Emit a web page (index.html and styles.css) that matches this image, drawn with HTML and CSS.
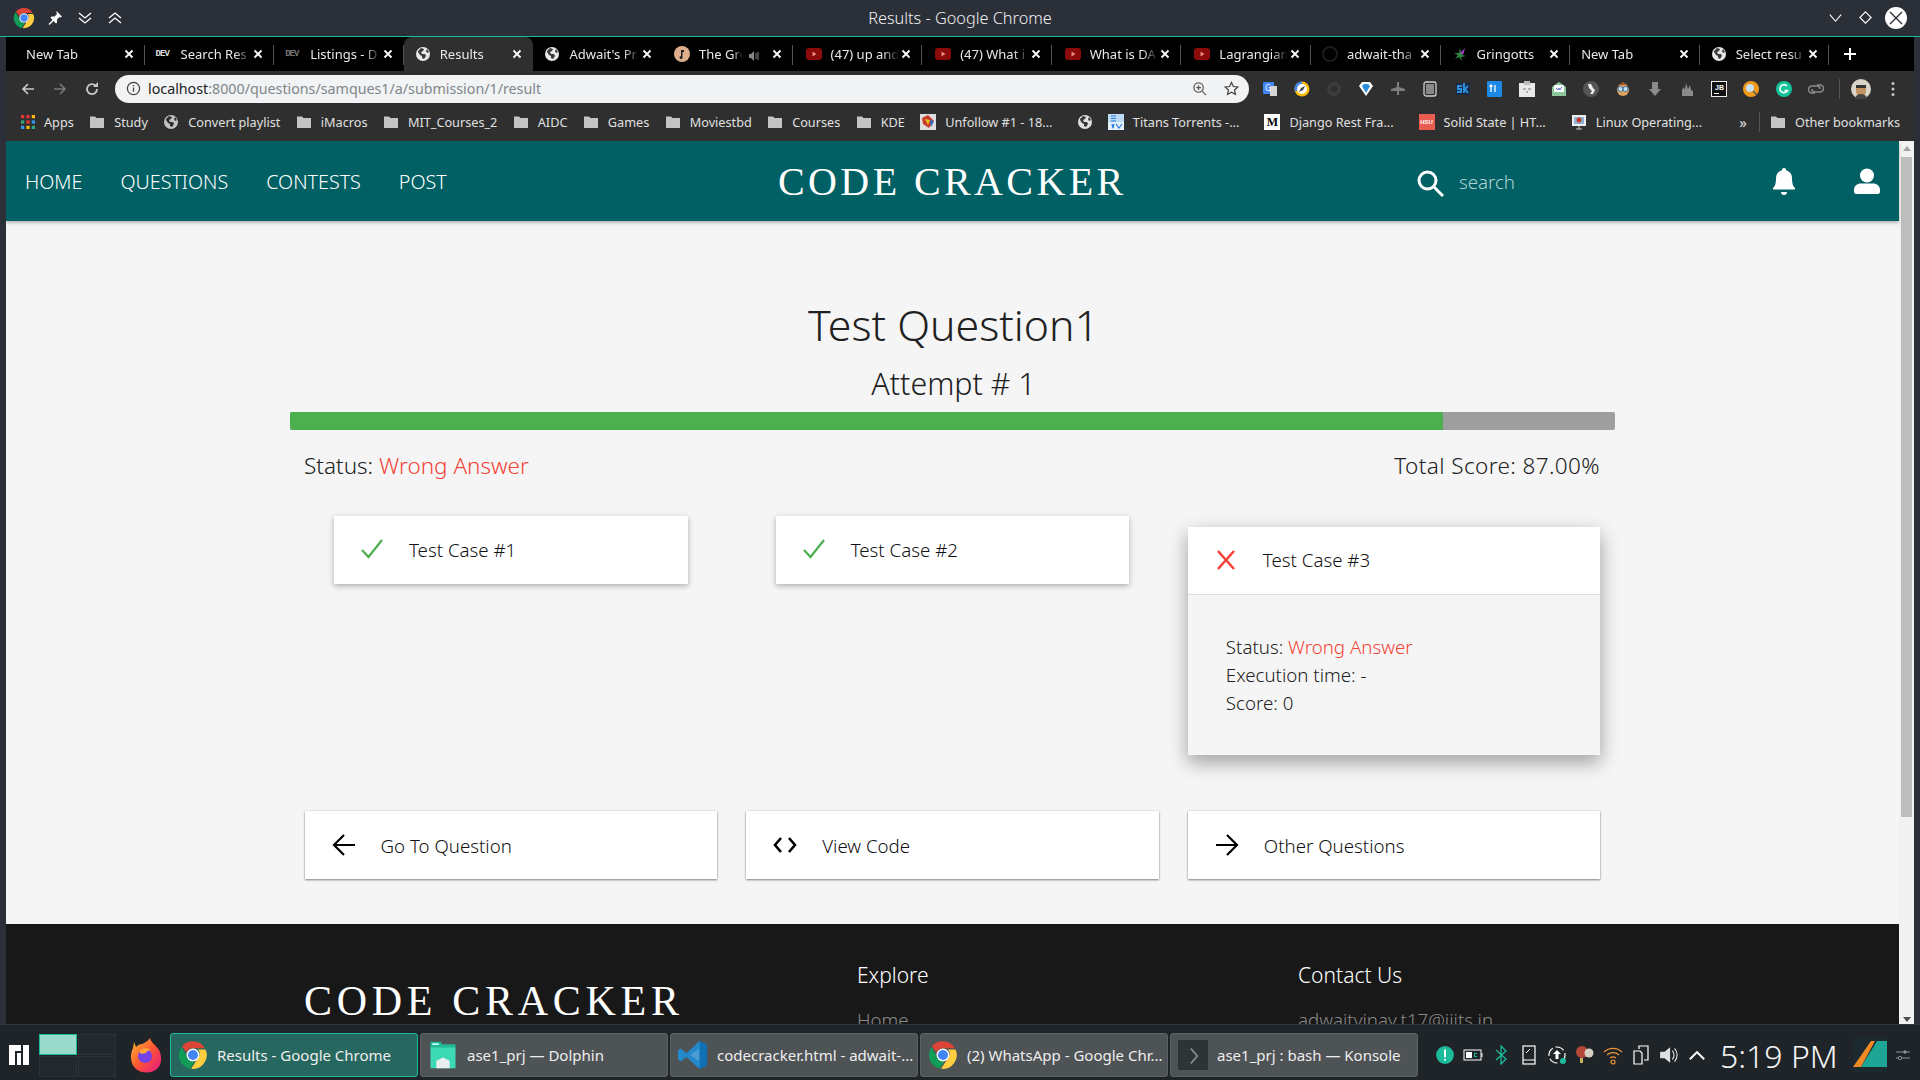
FILE: index.html
```html
<!DOCTYPE html>
<html lang="en">
<head>
    <meta charset="UTF-8">
    <title>Results - Google Chrome</title>
    <link rel="stylesheet" href="styles.css">
</head>
<body>
<svg class="sprites" width="0" height="0">
    <symbol id="chrome" viewBox="0 0 24 24">
        <path fill="#db4437" d="M12 1a11 11 0 0 1 9.5 5.5H12a5.5 5.5 0 0 0-5.2 3.7L3.2 4.9A11 11 0 0 1 12 1z"/>
        <path fill="#0f9d58" d="M2.9 5.5l4.7 8.9A5.5 5.5 0 0 0 13 17.400l-3.500 5.400A11 11 0 0 1 2.900 5.500z"/>
        <path fill="#ffcd40" d="M22 7.500A11 11 0 0 1 10.500 23l4.700-7.500A5.500 5.500 0 0 0 16 7.500z"/>
        <circle cx="12" cy="12" r="5.200" fill="#fff"/>
        <circle cx="12" cy="12" r="4" fill="#4285f4"/>
    </symbol>
    <symbol id="globe" viewBox="0 0 16 16">
        <circle cx="8" cy="8" r="7" fill="currentColor"/>
        <path fill="#000" opacity=".75" d="M3 5l3-3 3 1-1 2-2 1 1 2 3 0 1 2-2 3-2-1 0-2-2-1-2-3zM12 3l2 3-2 1-1-2z"/>
    </symbol>
    <symbol id="folder" viewBox="0 0 16 16">
        <path fill="currentColor" d="M1 2.500h5l1.500 1.500H15v10H1z"/>
    </symbol>
    <symbol id="yt" viewBox="0 0 16 12">
        <rect width="16" height="12" rx="3" fill="#8c0a0a"/>
        <path d="M6.500 3.500l4 2.500-4 2.500z" fill="#e98a8a"/>
    </symbol>
    <symbol id="x" viewBox="0 0 10 10">
        <path d="M1.500 1.500l7 7M8.500 1.500l-7 7" stroke="currentColor" stroke-width="1.800" fill="none"/>
    </symbol>
</svg>

<div class="window">
    <header class="titlebar">
        <div class="title-left">
            <svg class="chrome-logo"><use href="#chrome"/></svg>
            <svg class="wm-icon" viewBox="0 0 16 16"><path fill="#fff" d="M9.500 1l5.500 5.500-1.500 1-1-.5-2.500 2.500 0 3-1 1-2.500-2.500-4 4-1-1 4-4L3.500 7.500l1-1 3 0L10 4l-.5-1z"/></svg>
            <svg class="wm-icon" viewBox="0 0 16 16"><path fill="none" stroke="#fff" stroke-width="1.300" d="M2 3l6 5 6-5M2 8l6 5 6-5"/></svg>
            <svg class="wm-icon" viewBox="0 0 16 16"><path fill="none" stroke="#fff" stroke-width="1.300" d="M2 8l6-5 6 5M2 13l6-5 6 5"/></svg>
        </div>
        <div class="title-text">Results - Google Chrome</div>
        <div class="title-right">
            <svg class="wm-btn" viewBox="0 0 16 16"><path fill="none" stroke="#fff" stroke-width="1.200" d="M2 5l6 7 6-7"/></svg>
            <svg class="wm-btn" viewBox="0 0 16 16"><path fill="none" stroke="#fff" stroke-width="1.200" d="M8 2l6 6-6 6-6-6z"/></svg>
            <svg class="wm-close" viewBox="0 0 22 22"><circle cx="11" cy="11" r="11" fill="#fff"/><path d="M5 5l12 12M17 5L5 17" stroke="#2b2f38" stroke-width="1.400"/></svg>
        </div>
    </header>

    <nav class="tabstrip">
        <div class="tab"><span class="tab-name no-icon">New Tab</span><svg class="tab-x"><use href="#x"/></svg></div>
        <div class="tab"><span class="dev">DEV</span><span class="tab-name">Search Res</span><svg class="tab-x"><use href="#x"/></svg></div>
        <div class="tab"><span class="dev dim">DEV</span><span class="tab-name">Listings - D</span><svg class="tab-x"><use href="#x"/></svg></div>
        <div class="tab active"><svg class="tab-ico"><use href="#globe"/></svg><span class="tab-name">Results</span><svg class="tab-x"><use href="#x"/></svg></div>
        <div class="tab no-sep"><svg class="tab-ico"><use href="#globe"/></svg><span class="tab-name">Adwait's Pr</span><svg class="tab-x"><use href="#x"/></svg></div>
        <div class="tab"><svg class="tab-ico" viewBox="0 0 16 16"><circle cx="8" cy="8" r="8" fill="#dcae8c"/><path d="M7 11V4h3v2H8.500v5a1.500 1.500 0 1 1-1.500-1z" fill="#222"/></svg><span class="tab-name short">The Gre</span><span class="speaker"><svg viewBox="0 0 12 12"><path fill="#888" d="M1 4h2l3-3v10L3 8H1z"/><path fill="none" stroke="#888" d="M8 3v6M10 2v8"/></svg></span><svg class="tab-x"><use href="#x"/></svg></div>
        <div class="tab"><svg class="tab-yt"><use href="#yt"/></svg><span class="tab-name">(47) up and</span><svg class="tab-x"><use href="#x"/></svg></div>
        <div class="tab"><svg class="tab-yt"><use href="#yt"/></svg><span class="tab-name">(47) What i</span><svg class="tab-x"><use href="#x"/></svg></div>
        <div class="tab"><svg class="tab-yt"><use href="#yt"/></svg><span class="tab-name">What is DA</span><svg class="tab-x"><use href="#x"/></svg></div>
        <div class="tab"><svg class="tab-yt"><use href="#yt"/></svg><span class="tab-name">Lagrangian</span><svg class="tab-x"><use href="#x"/></svg></div>
        <div class="tab"><svg class="tab-ico github" viewBox="0 0 16 16"><circle cx="8" cy="8" r="7" fill="none" stroke="#1c1c1c" stroke-width="2"/></svg><span class="tab-name">adwait-tha</span><svg class="tab-x"><use href="#x"/></svg></div>
        <div class="tab"><svg class="tab-ico" viewBox="0 0 16 16"><path d="M8 2l1 5 4-4-3 6 4 1-5 1 1 4-3-4-4 2 3-4-4-2 5 0z" fill="#2e8b3c"/><path d="M8 7l5-5-2 7z" fill="#a03cc0"/></svg><span class="tab-name">Gringotts</span><svg class="tab-x"><use href="#x"/></svg></div>
        <div class="tab"><span class="tab-name no-icon">New Tab</span><svg class="tab-x"><use href="#x"/></svg></div>
        <div class="tab"><svg class="tab-ico"><use href="#globe"/></svg><span class="tab-name">Select resu</span><svg class="tab-x"><use href="#x"/></svg></div>
        <svg class="tab-plus" viewBox="0 0 14 14"><path d="M7 1v12M1 7h12" stroke="#fff" stroke-width="2"/></svg>
    </nav>

    <div class="toolbar">
        <svg class="tool-btn" viewBox="0 0 16 16"><path fill="none" stroke="#c8c8c8" stroke-width="1.700" d="M14 8H3M8 3L3 8l5 5"/></svg>
        <svg class="tool-btn" viewBox="0 0 16 16"><path fill="none" stroke="#777" stroke-width="1.700" d="M2 8h11M8 3l5 5-5 5"/></svg>
        <svg class="tool-btn" viewBox="0 0 16 16"><path fill="none" stroke="#c8c8c8" stroke-width="1.800" d="M13 8a5 5 0 1 1-1.500-3.500"/><path fill="#c8c8c8" d="M9 6h5V1z"/></svg>
        <div class="omnibox">
            <svg class="info" viewBox="0 0 16 16"><circle cx="8" cy="8" r="6.500" fill="none" stroke="#444" stroke-width="1.300"/><path d="M8 7v4.500M8 4.300v1.400" stroke="#444" stroke-width="1.400"/></svg>
            <span class="url"><b>localhost</b>:8000/questions/samques1/a/submission/1/result</span>
            <svg class="omni-ico" viewBox="0 0 16 16"><circle cx="7" cy="7" r="5" fill="none" stroke="#555" stroke-width="1.300"/><path d="M11 11l4 4M7 4.500v5M4.500 7h5" stroke="#555" stroke-width="1.300"/></svg>
            <svg class="omni-ico" viewBox="0 0 16 16"><path fill="none" stroke="#444" stroke-width="1.300" d="M8 1.500l2 4.400 4.700.5-3.500 3.200 1 4.700L8 11.900l-4.200 2.400 1-4.700L1.300 6.400 6 5.900z"/></svg>
        </div>
        <div class="extensions">
            <span class="ext"><svg viewBox="0 0 16 16"><rect width="11" height="12" x="1" y="1" rx="1" fill="#4285f4"/><rect x="8" y="5" width="7" height="10" fill="#d5d5d5"/><text x="3" y="10" font-size="8" fill="#fff">G</text></svg></span>
            <span class="ext"><svg viewBox="0 0 16 16"><circle cx="8" cy="8" r="7.500" fill="#fbbc05"/><path d="M8 .500a7.500 7.500 0 0 0-7 10l7-2.500z" fill="#4285f4"/><circle cx="8" cy="8" r="5" fill="#fff"/><path d="M11 5L9 9 5 11l2-4z" fill="#444"/></svg></span>
            <span class="ext"><svg viewBox="0 0 16 16"><circle cx="8" cy="8" r="7" fill="#3c3c3c"/><circle cx="8" cy="8" r="3.500" fill="#2f2f2f"/></svg></span>
            <span class="ext"><svg viewBox="0 0 16 16"><path fill="#fff" d="M1 5l3-4h8l3 4-7 10z"/><path fill="#2a8fdc" d="M4 5l2-2h4l2 2-4 7z"/></svg></span>
            <span class="ext"><svg viewBox="0 0 16 16"><path fill="#7d7d7d" d="M7 1h2v5l6 2v2H9v4H7v-4H1V8l6-2z"/></svg></span>
            <span class="ext"><svg viewBox="0 0 16 16"><rect x="2" y="1" width="12" height="14" rx="2" fill="none" stroke="#cfcfcf" stroke-width="1.300"/><rect x="4" y="3" width="8" height="10" fill="#888"/></svg></span>
            <span class="ext"><svg viewBox="0 0 16 16"><rect x="1" y="2" width="14" height="12" fill="#1a2a44"/><path fill="none" stroke="#2a8fdc" stroke-width="2" d="M7 5H3v3h3v3H2M9 2v10M13 5l-3 3 3 4"/></svg></span>
            <span class="ext"><svg viewBox="0 0 16 16"><rect width="15" height="16" rx="1" fill="#1e88e5"/><path d="M4 11V4M2.500 5.500L4 4l1.500 1.500M8 4v7" stroke="#fff" stroke-width="1.300" fill="none"/></svg></span>
            <span class="ext"><svg viewBox="0 0 16 16"><rect y="2" width="16" height="14" fill="#e8e8e8"/><rect x="5" width="6" height="4" fill="#bbb"/><path d="M4 8h3M9 8h3M7 11h2" stroke="#777"/></svg></span>
            <span class="ext"><svg viewBox="0 0 16 16"><path fill="#8bc79a" d="M1 6l7-5 7 5v9H1z"/><rect x="3" y="4" width="10" height="7" rx="1" fill="#fff"/><path d="M5 7l2 2 1-2 1 2 2-3" stroke="#5b6cc0" fill="none"/></svg></span>
            <span class="ext"><svg viewBox="0 0 16 16"><circle cx="8" cy="8" r="8" fill="#555"/><path d="M5 3h3l2 4 2 2-2 4H7l2-3-3-3z" fill="#eee"/></svg></span>
            <span class="ext"><svg viewBox="0 0 16 16"><circle cx="8" cy="9" r="6" fill="#e0a060"/><circle cx="5.500" cy="8" r="2.500" fill="#bfe3f5" stroke="#3a6ea5"/><circle cx="10.500" cy="8" r="2.500" fill="#bfe3f5" stroke="#3a6ea5"/><path d="M3 4l5-3 5 3" fill="#9c5a2c"/></svg></span>
            <span class="ext"><svg viewBox="0 0 16 16"><path fill="#8a8a8a" d="M5 1h6v7h3l-6 7-6-7h3z"/></svg></span>
            <span class="ext"><svg viewBox="0 0 16 16"><path fill="#8a8a8a" d="M3 15V9l2-3 1 3 1-7 2 6 2-4 1 5 2 1v5z"/></svg></span>
            <span class="ext"><svg viewBox="0 0 16 16"><rect x=".500" y=".500" width="15" height="15" fill="#111" stroke="#eee"/><text x="4" y="9" font-size="7" font-family="Liberation Sans" font-weight="700" fill="#fff">JB</text><path d="M3 12.500h5" stroke="#fff"/></svg></span>
            <span class="ext"><svg viewBox="0 0 16 16"><circle cx="8" cy="8" r="8" fill="#f09a1c"/><circle cx="7" cy="7" r="4" fill="#c7dfee"/><path d="M10 10l4 4" stroke="#555" stroke-width="1.500"/></svg></span>
            <span class="ext"><svg viewBox="0 0 16 16"><circle cx="8" cy="8" r="8" fill="#15c39a"/><path d="M11 5a4 4 0 1 0 .500 4.500H8.500" stroke="#fff" stroke-width="1.600" fill="none"/></svg></span>
            <span class="ext"><svg viewBox="0 0 16 16"><path d="M7 12H4a3 3 0 0 1 0-7h5a3 3 0 0 1 3 3M9 4h3a3 3 0 0 1 0 7H7a3 3 0 0 1-3-3" fill="none" stroke="#8a8a8a" stroke-width="1.600"/></svg></span>
            <span class="ext-sep"></span>
            <span class="avatar"><svg viewBox="0 0 20 20"><circle cx="10" cy="10" r="10" fill="#d8d4c8"/><path d="M5 8h10v4a5 6 0 0 1-10 0z" fill="#c2925f"/><rect x="5" y="6" width="10" height="3" fill="#333"/><path d="M4 20a6 5 0 0 1 12 0z" fill="#444"/></svg></span>
            <svg class="kebab" viewBox="0 0 4 16"><circle cx="2" cy="2.500" r="1.500" fill="#c8c8c8"/><circle cx="2" cy="8" r="1.500" fill="#c8c8c8"/><circle cx="2" cy="13.500" r="1.500" fill="#c8c8c8"/></svg>
        </div>
    </div>

    <div class="bookmarks">
        <span class="mark"><svg class="apps" viewBox="0 0 13 13"><g><rect width="3" height="3" fill="#e33"/><rect x="5" width="3" height="3" fill="#e33"/><rect x="10" width="3" height="3" fill="#fb0"/><rect y="5" width="3" height="3" fill="#3a7"/><rect x="5" y="5" width="3" height="3" fill="#e33"/><rect x="10" y="5" width="3" height="3" fill="#39e"/><rect y="10" width="3" height="3" fill="#39e"/><rect x="5" y="10" width="3" height="3" fill="#fb0"/><rect x="10" y="10" width="3" height="3" fill="#3a7"/></g></svg>Apps</span>
        <span class="mark"><svg class="bm-ico"><use href="#folder"/></svg>Study</span>
        <span class="mark"><svg class="bm-ico"><use href="#globe"/></svg>Convert playlist</span>
        <span class="mark"><svg class="bm-ico"><use href="#folder"/></svg>iMacros</span>
        <span class="mark"><svg class="bm-ico"><use href="#folder"/></svg>MIT_Courses_2</span>
        <span class="mark"><svg class="bm-ico"><use href="#folder"/></svg>AIDC</span>
        <span class="mark"><svg class="bm-ico"><use href="#folder"/></svg>Games</span>
        <span class="mark"><svg class="bm-ico"><use href="#folder"/></svg>Moviestbd</span>
        <span class="mark"><svg class="bm-ico"><use href="#folder"/></svg>Courses</span>
        <span class="mark"><svg class="bm-ico"><use href="#folder"/></svg>KDE</span>
        <span class="mark"><svg class="bm-ico" viewBox="0 0 16 16"><rect width="16" height="16" fill="#ddd"/><path d="M2 4l6-3 6 6-5 7-6-4z" fill="#c8392b"/><path d="M5 5l5 1-2 5z" fill="#e8c21c"/><path d="M10 6l4 1-3 6z" fill="#2b6cc8"/></svg>Unfollow #1 - 18...</span>
        <span class="mark mark-gap"><svg class="bm-ico"><use href="#globe"/></svg></span>
        <span class="mark wide"><svg class="bm-ico" viewBox="0 0 16 16"><rect width="16" height="16" fill="#fff"/><rect y="0" width="16" height="8" fill="#bcd9f5"/><rect y="8" width="16" height="8" fill="#e4f0fb"/><path d="M3 2h5M3 4.500h5M3 7h5M4 10l1 4 1-4M8 10l3 4 3-4" stroke="#2a7be0" stroke-width="1.200" fill="none"/></svg>Titans Torrents -...</span>
        <span class="mark wide"><span class="medium">M</span>Django Rest Fra...</span>
        <span class="mark wide"><span class="hsu">HSU</span>Solid State | HT...</span>
        <span class="mark"><svg class="bm-ico" viewBox="0 0 16 16"><rect x="1" y="1" width="14" height="11" fill="#eee"/><rect x="3" y="3" width="10" height="7" fill="#8fb0d8"/><circle cx="8" cy="6" r="2.500" fill="#c8392b"/><path d="M8 12v3M5 15h6" stroke="#ccc"/></svg>Linux Operating...</span>
        <span class="more">»</span>
        <span class="ext-sep bm-sep"></span>
        <span class="mark other"><svg class="bm-ico"><use href="#folder"/></svg>Other bookmarks</span>
    </div>

    <div class="viewport">
        <main class="page">
            <div class="site-nav">
                <ul class="nav-links">
                    <li>HOME</li>
                    <li>QUESTIONS</li>
                    <li>CONTESTS</li>
                    <li>POST</li>
                </ul>
                <div class="brand">CODE CRACKER</div>
                <div class="nav-search">
                    <svg class="search-ico" viewBox="0 0 28 28"><circle cx="11.500" cy="11.500" r="8.500" fill="none" stroke="#fff" stroke-width="3"/><path d="M18 18l9 9" stroke="#fff" stroke-width="3"/></svg>
                    <span>search</span>
                </div>
                <svg class="bell" viewBox="0 0 24 28"><path fill="#fff" d="M12 1a2 2 0 0 1 2 2.300c4 1 6 4.200 6 8.200 0 5 1 7.500 3 9.500v1.500H1V21c2-2 3-4.500 3-9.500 0-4 2-7.200 6-8.200A2 2 0 0 1 12 1zM9 25h6a3 3 0 0 1-6 0z"/></svg>
                <svg class="user" viewBox="0 0 26 26"><circle cx="13" cy="7.500" r="7" fill="#fff"/><path fill="#fff" d="M0 22c0-4 3-6.500 7-6.500h12c4 0 7 2.500 7 6.500v1.500a2.500 2.500 0 0 1-2.500 2.500h-21A2.500 2.500 0 0 1 0 23.500z"/></svg>
            </div>

            <section class="result">
                <h1>Test Question1</h1>
                <h2>Attempt # 1</h2>
                <div class="progress"><div class="progress-fill" style="width: 87%"></div></div>
                <div class="summary">
                    <span>Status: <span class="wrong">Wrong Answer</span></span>
                    <span class="total">Total Score: 87.00%</span>
                </div>
                <div class="cases">
                    <div class="case-col">
                        <div class="case">
                            <div class="case-head">
                                <svg class="case-ico" viewBox="0 0 24 24"><path fill="none" stroke="#4caf50" stroke-width="2.200" d="M2 13l6.500 7L22 3"/></svg>
                                Test Case #1
                            </div>
                        </div>
                    </div>
                    <div class="case-col">
                        <div class="case">
                            <div class="case-head">
                                <svg class="case-ico" viewBox="0 0 24 24"><path fill="none" stroke="#4caf50" stroke-width="2.200" d="M2 13l6.500 7L22 3"/></svg>
                                Test Case #2
                            </div>
                        </div>
                    </div>
                    <div class="case-col">
                        <div class="case open">
                            <div class="case-head">
                                <svg class="case-ico" viewBox="0 0 24 24"><path fill="none" stroke="#f44336" stroke-width="2.600" d="M4 3l16 18M20 3L4 21"/></svg>
                                Test Case #3
                            </div>
                            <div class="case-body">
                                <div>Status: <span class="wrong">Wrong Answer</span></div>
                                <div>Execution time: -</div>
                                <div>Score: 0</div>
                            </div>
                        </div>
                    </div>
                </div>
                <div class="actions">
                    <a class="action">
                        <svg class="action-ico" viewBox="0 0 24 24"><path fill="none" stroke="#000" stroke-width="2.200" d="M23 12H3M12 2L2 12l10 10"/></svg>
                        Go To Question
                    </a>
                    <a class="action">
                        <svg class="action-ico" viewBox="0 0 24 24"><path fill="none" stroke="#000" stroke-width="2.600" d="M8 5l-6 7 6 7M16 5l6 7-6 7"/></svg>
                        View Code
                    </a>
                    <a class="action">
                        <svg class="action-ico" viewBox="0 0 24 24"><path fill="none" stroke="#000" stroke-width="2.200" d="M1 12h20M12 2l10 10-10 10"/></svg>
                        Other Questions
                    </a>
                </div>
            </section>

            <footer class="site-footer">
                <div class="footer-brand">CODE CRACKER</div>
                <div class="footer-col">
                    <h3>Explore</h3>
                    <p>Home</p>
                </div>
                <div class="footer-col">
                    <h3>Contact Us</h3>
                    <p>adwaitvinay.t17@iiits.in</p>
                </div>
            </footer>
        </main>
        <div class="scrollbar">
            <span class="scroll-up"></span>
            <div class="scroll-thumb"></div>
            <span class="scroll-down"></span>
        </div>
    </div>
</div>

<div class="taskbar">
    <svg class="manjaro" viewBox="0 0 20 20"><path fill="#fff" d="M0 0h12v6H6v14H0zM8 8h4v12H8zM14 0h6v20h-6z"/></svg>
    <div class="pager">
        <span class="desk current"></span><span class="desk"></span>
        <span class="desk"></span><span class="desk"></span>
    </div>
    <svg class="firefox" viewBox="0 0 32 36"><defs><linearGradient id="ff" x1="0" y1="0" x2="1" y2="1"><stop offset="0" stop-color="#ffbd2e"/><stop offset=".5" stop-color="#ff5634"/><stop offset="1" stop-color="#e31587"/></linearGradient></defs><path fill="url(#ff)" d="M20 1c1 5 6 7 9 12 3 6 3 13-1 18-6 6-17 6-23 0-5-5-5-14-2-20l1-6 2 5c2-2 4-3 6-3 3-1 6-3 8-6z"/><circle cx="15" cy="19" r="7" fill="#7542e5"/><path d="M9 14c3-3 8-4 12-1-3 0-4 1-5 3l-5 1z" fill="#ffa436"/></svg>
    <div class="task current"><svg class="task-ico"><use href="#chrome"/></svg><span>Results - Google Chrome</span></div>
    <div class="task"><svg class="task-ico" viewBox="0 0 32 36"><path fill="#1fb996" d="M1 2h12l2 3h16v6H1z"/><path fill="#3dd9b4" d="M1 9h30v25H1z"/><rect x="3" y="4" width="8" height="2" fill="#cff"/><path fill="#e8eeee" d="M8 34V25l8-4 8 4v9z"/></svg><span>ase1_prj — Dolphin</span></div>
    <div class="task"><svg class="task-ico" viewBox="0 0 32 32"><path fill="#2489ca" d="M23 1l8 4v22l-8 4-14-13-6 5-3-2v-10l3-2 6 5z"/><path fill="#fff" opacity=".18" d="M23 9L13 16l10 7z"/><path fill="#1070b3" d="M23 1l8 4v22l-8 4z"/></svg><span>codecracker.html - adwait-...</span></div>
    <div class="task"><svg class="task-ico"><use href="#chrome"/></svg><span>(2) WhatsApp - Google Chr...</span></div>
    <div class="task"><svg class="task-ico konsole" viewBox="0 0 28 28"><rect width="28" height="28" fill="#2c3436"/><path d="M12 8l6 7-6 7" fill="none" stroke="#8a9396" stroke-width="1.500"/></svg><span>ase1_prj : bash — Konsole</span></div>
    <div class="tray">
        <svg viewBox="0 0 18 18"><circle cx="9" cy="9" r="8" fill="#1abc9c"/><path d="M9 4v7M9 12.500v1.500" stroke="#fff" stroke-width="1.800"/></svg>
        <svg viewBox="0 0 20 18"><rect x="1" y="4" width="17" height="10" fill="none" stroke="#fff"/><rect x="3" y="6" width="6" height="6" fill="#fff"/><path d="M11 7h3v1h-2v2h2v1h-3z" fill="#1abc9c"/><rect x="18.500" y="7" width="1" height="4" fill="#fff"/></svg>
        <svg viewBox="0 0 18 20"><path fill="none" stroke="#1abc9c" stroke-width="1.300" d="M4 5l10 9-5 5V1l5 5L4 15"/></svg>
        <svg viewBox="0 0 16 20"><rect x="2" y="1" width="12" height="18" fill="none" stroke="#fff" stroke-width="1.200"/><path d="M2 15h12M5 8l4-4" stroke="#fff"/></svg>
        <svg viewBox="0 0 20 20"><circle cx="10" cy="10" r="8" fill="none" stroke="#fff" stroke-width="1.200" stroke-dasharray="9 3"/><path d="M10 5l4 4h-2.500v5h-3V9H6z" fill="#fff"/><circle cx="16" cy="16" r="3" fill="#1abc9c"/></svg>
        <svg viewBox="0 0 20 20"><circle cx="7" cy="7" r="6" fill="#b5473a"/><circle cx="14" cy="8" r="4.500" fill="#d6cfc4"/><rect x="5" y="13" width="3" height="5" fill="#c9b560"/></svg>
        <svg viewBox="0 0 20 20"><path fill="none" stroke="#f0953a" stroke-width="1.200" d="M1 7a13 13 0 0 1 18 0M4 10a9 9 0 0 1 12 0M7 13a5 5 0 0 1 6 0"/><circle cx="10" cy="17" r="2" fill="none" stroke="#f0953a" stroke-width="1.200"/></svg>
        <svg viewBox="0 0 18 20"><path fill="none" stroke="#fff" stroke-width="1.200" d="M7 4V1h9v14h-4M2 6h6l2 2v11H2z"/></svg>
        <svg viewBox="0 0 18 18"><path fill="#e0e0e0" d="M1 6h4l5-4v14l-5-4H1z"/><path fill="none" stroke="#e0e0e0" d="M12 5a6 6 0 0 1 0 8M14 3a9 9 0 0 1 0 12"/></svg>
        <svg viewBox="0 0 14 14"><path fill="none" stroke="#fff" stroke-width="1.400" d="M2 10l5-5 5 5"/></svg>
    </div>
    <div class="clock">5:19 PM</div>
    <svg class="kde" viewBox="0 0 34 34"><rect width="34" height="34" fill="#1c2a30"/><path d="M0 29L18 3h4L8 29z" fill="#f08a24"/><path d="M8 29L24 3h10v26z" fill="#1fa595"/></svg>
    <svg class="sliders" viewBox="0 0 14 14"><path d="M0 4h14M0 10h14" stroke="#8a9396"/><circle cx="9" cy="4" r="1.700" fill="#8a9396"/><circle cx="4" cy="10" r="1.700" fill="#1f2428" stroke="#8a9396"/></svg>
</div>
</body>
</html>
```
FILE: styles.css
```css
* {
    box-sizing: border-box;
}

html, body {
    margin: 0;
    height: 100%;
    overflow: hidden;
}

body {
    width: 1920px;
    height: 1080px;
    display: flex;
    flex-direction: column;
    background-color: #1f2428;
    font-family: "Noto Sans", sans-serif;
}

.sprites {
    position: absolute;
}

.window {
    height: 1024px;
    display: flex;
    flex-direction: column;
    background-color: #2b2f38;
}

/* window title */
.titlebar {
    height: 37px;
    flex: none;
    display: flex;
    align-items: center;
    justify-content: space-between;
    padding: 0 13px 1px 13px;
    border-bottom: 1px solid #1abc9c;
    position: relative;
}

.title-left, .title-right {
    display: flex;
    align-items: center;
}

.chrome-logo {
    width: 22px;
    height: 22px;
    margin-right: 12px;
}

.wm-icon {
    width: 16px;
    height: 16px;
    margin-right: 14px;
}

.title-text {
    position: absolute;
    left: 0;
    right: 0;
    text-align: center;
    color: #f0f0f0;
    font-size: 16.300px;
    font-weight: 300;
}

.wm-btn {
    width: 15px;
    height: 15px;
    margin-right: 15px;
}

.wm-close {
    width: 22px;
    height: 22px;
    margin-left: -3px;
}

/* tabs */
.tabstrip {
    height: 34px;
    flex: none;
    margin-left: 6px;
    margin-right: 6px;
    background-color: #000;
    display: flex;
    align-items: center;
    padding-left: 9px;
}

.tab {
    width: 129.600px;
    height: 34px;
    flex: none;
    display: flex;
    align-items: center;
    padding: 0 11px 0 11px;
    color: #e8e8e8;
    font-size: 13px;
    position: relative;
}

.tab::after {
    content: "";
    position: absolute;
    right: 0;
    top: 8px;
    height: 20px;
    width: 1px;
    background-color: #555;
}

.tab.no-sep::after, .tab.active::after {
    display: none;
}

.tab.active {
    background-color: #2f2f2f;
    border-radius: 8px 8px 0 0;
}

.tab-name {
    flex: 1;
    overflow: hidden;
    white-space: nowrap;
    margin-left: 9px;
    -webkit-mask-image: linear-gradient(to right, #000 75%, transparent 97%);
    mask-image: linear-gradient(to right, #000 75%, transparent 97%);
}

.tab-name.no-icon {
    margin-left: 0;
}

.tab-x {
    width: 10px;
    height: 10px;
    flex: none;
    color: #fff;
}

.tab-ico {
    width: 16px;
    height: 16px;
    flex: none;
    color: #e8e8e8;
}

.tab-yt {
    width: 16px;
    height: 12px;
    flex: none;
    margin-left: 2px;
}

.speaker {
    width: 12px;
    height: 12px;
    flex: none;
    margin: 0 12px 0 4px;
}

.dev {
    font-family: "Liberation Mono", monospace;
    font-size: 9px;
    font-weight: 700;
    width: 16px;
    flex: none;
    letter-spacing: -1px;
    color: #ddd;
}

.dev.dim {
    color: #777;
}

.tab-plus {
    width: 14px;
    height: 14px;
    margin-left: 14px;
}

/* toolbar */
.toolbar {
    height: 37px;
    flex: none;
    margin: 0 6px;
    background-color: #2f2f2f;
    display: flex;
    align-items: center;
    padding: 0 0 2px 14px;
}

.tool-btn {
    width: 16px;
    height: 16px;
    flex: none;
    margin-right: 16px;
}

.omnibox {
    width: 1134px;
    height: 28px;
    flex: none;
    background-color: #f1f3f4;
    border-radius: 14px;
    display: flex;
    align-items: center;
    padding: 0 10px 0 11px;
    margin-left: -1px;
}

.info {
    width: 15px;
    height: 15px;
    flex: none;
    margin-right: 7px;
}

.url {
    flex: 1;
    font-size: 14.250px;
    color: #80868b;
}

.url b {
    font-weight: 400;
    color: #222;
}

.omni-ico {
    width: 15px;
    height: 15px;
    margin-left: 17px;
}

.extensions {
    display: flex;
    align-items: center;
    margin-left: 13px;
}

.ext {
    width: 16px;
    height: 16px;
    margin-right: 16.100px;
    flex: none;
}

.ext svg, .avatar svg {
    display: block;
    width: 100%;
    height: 100%;
}

.ext-sep {
    width: 1px;
    height: 20px;
    background-color: #555;
    margin-right: 11px;
    margin-left: -1px;
}

.avatar {
    width: 20px;
    height: 20px;
    margin-right: 20px;
}

.kebab {
    width: 4px;
    height: 16px;
}

/* bookmarks */
.bookmarks {
    height: 33px;
    flex: none;
    margin: 0 6px;
    background-color: #2f2f2f;
    display: flex;
    align-items: center;
    padding: 0 14px 5px 15px;
    color: #e0e0e0;
    font-size: 12.700px;
    white-space: nowrap;
}

.mark {
    display: flex;
    align-items: center;
    margin-right: 15.400px;
    flex: none;
}

.mark-gap {
    margin-left: 9px;
    margin-right: 15px;
}

.wide {
    margin-right: 25px;
}

.bm-ico {
    width: 16px;
    height: 16px;
    flex: none;
    margin-right: 9px;
    color: #c4c4c4;
}

.mark-gap .bm-ico {
    color: #e0e0e0;
    margin-right: 0;
}

.apps {
    width: 14px;
    height: 14px;
    margin-right: 9px;
}

.medium {
    width: 16px;
    height: 16px;
    background-color: #fff;
    color: #000;
    font: 700 12px "Liberation Serif", serif;
    text-align: center;
    line-height: 16px;
    margin-right: 9px;
}

.hsu {
    width: 16px;
    height: 16px;
    background-color: #e95c50;
    color: #fff;
    font: 700 6px "Liberation Sans", sans-serif;
    text-align: center;
    line-height: 16px;
    margin-right: 9px;
}

.more {
    margin-left: auto;
    font-size: 15px;
    margin-right: 12px;
}

.bm-sep {
    margin-left: 0;
    margin-right: 10px;
}

.other {
    margin-right: 0;
}

/* page in the browser */
.viewport {
    flex: 1;
    min-height: 0;
    margin: 0 6px;
    display: flex;
    overflow: hidden;
}

.page {
    flex: 1;
    min-width: 0;
    background-color: #f5f5f5;
    color: #212121;
    font-weight: 300;
}

.site-nav {
    height: 80px;
    background-color: #006064;
    display: flex;
    align-items: center;
    position: relative;
    color: #fff;
    box-shadow: 0 2px 3px rgba(0, 0, 0, 0.25);
}

.nav-links {
    display: flex;
    list-style: none;
    margin: 0;
    padding: 0 0 0 19px;
    font-size: 19.700px;
    gap: 38px;
}

.brand {
    position: absolute;
    left: 772px;
    font-family: "Liberation Serif", serif;
    font-weight: 400;
    font-size: 40px;
    letter-spacing: 3.400px;
    white-space: nowrap;
}

.nav-search {
    display: flex;
    align-items: center;
    margin-left: auto;
    font-size: 18.700px;
    color: #b2d1d2;
}

.search-ico {
    width: 28px;
    height: 28px;
    margin-right: 15px;
    margin-top: 4px;
}

.bell {
    width: 24px;
    height: 28px;
    margin-left: 257px;
}

.user {
    width: 26px;
    height: 26px;
    margin-left: 58px;
    margin-right: 19px;
}

.result {
    width: 1325px;
    margin-left: 284px;
    padding-top: 79px;
    height: 703px;
}

h1 {
    margin: 0;
    padding-left: 2px;
    font-size: 42.800px;
    font-weight: 300;
    line-height: 50px;
    text-align: center;
}

h2 {
    margin: 15px 0 0;
    padding-left: 2px;
    font-size: 30.400px;
    font-weight: 300;
    line-height: 38px;
    text-align: center;
}

.progress {
    height: 18px;
    margin-top: 9px;
    background-color: #9e9e9e;
    border-radius: 2px;
    overflow: hidden;
}

.progress-fill {
    height: 100%;
    background-color: #4caf50;
}

.summary {
    display: flex;
    justify-content: space-between;
    padding: 0 15px 0 14px;
    margin-top: 21px;
    font-size: 22.500px;
    line-height: 30px;
}

.total {
    letter-spacing: 0.400px;
}

.wrong {
    color: #f44336;
}

.cases {
    display: grid;
    grid-template-columns: repeat(3, 1fr);
    margin-top: 35px;
    height: 269px;
}

.case-col {
    padding: 0 14.500px;
}

.case {
    margin: 0 29.500px;
    background-color: #fff;
    box-shadow: 0 2px 5px rgba(0, 0, 0, 0.2), 0 2px 8px rgba(0, 0, 0, 0.1);
}

.case.open {
    margin: 11px 0 0;
    box-shadow: 0 8px 17px rgba(0, 0, 0, 0.22), 0 6px 20px rgba(0, 0, 0, 0.15);
}

.case-head {
    height: 68px;
    display: flex;
    align-items: center;
    padding: 0 0 2px 26px;
    font-size: 18.700px;
    color: #111;
}

.case.open .case-head {
    height: 67px;
}

.case-ico {
    width: 24px;
    height: 24px;
    margin-right: 25px;
    flex: none;
}

.case-body {
    background-color: #f5f5f5;
    border-top: 1px solid #ddd;
    padding: 38px 38px 38px;
    font-size: 18.700px;
    line-height: 28px;
    color: #212121;
}

.actions {
    display: grid;
    grid-template-columns: repeat(3, 1fr);
    margin-top: 26px;
    padding: 0 14.500px;
    column-gap: 29px;
}

.action {
    height: 68px;
    background-color: #fff;
    display: flex;
    align-items: center;
    padding-left: 27px;
    font-size: 18.700px;
    color: #111;
    box-shadow: 0 1px 2px rgba(0, 0, 0, 0.45), 0 0 2px rgba(0, 0, 0, 0.12);
}

.action-ico {
    width: 24px;
    height: 24px;
    margin-right: 25px;
    flex: none;
}

.site-footer {
    background-color: #181818;
    height: 200px;
    display: grid;
    grid-template-columns: 553px 441px 1fr;
    padding: 37px 0 0 298px;
    color: #fff;
}

.footer-brand {
    font-family: "Liberation Serif", serif;
    font-weight: 400;
    font-size: 42px;
    letter-spacing: 4.700px;
    margin-top: 16px;
    white-space: nowrap;
}

.footer-col h3 {
    margin: 0;
    font-size: 21px;
    font-weight: 300;
    line-height: 28px;
}

.footer-col p {
    margin: 17px 0 0;
    font-size: 18.700px;
    line-height: 28px;
    color: #8a8a8a;
}

.scrollbar {
    width: 15px;
    flex: none;
    background-color: #f1f1f1;
    display: flex;
    flex-direction: column;
    align-items: center;
}

.scroll-up {
    margin-top: 5px;
    border: 4px solid transparent;
    border-top: 0;
    border-bottom: 5px solid #a3a3a3;
}

.scroll-thumb {
    width: 11px;
    height: 660px;
    margin-top: 6px;
    background-color: #bdbdbd;
}

.scroll-down {
    margin-top: auto;
    margin-bottom: 2px;
    border: 4px solid transparent;
    border-bottom: 0;
    border-top: 5px solid #505050;
}

/* panel at the bottom */
.taskbar {
    flex: 1;
    display: flex;
    align-items: center;
    background-color: #1f2428;
    border-top: 1px solid #2f363d;
    padding: 8px 0 3px 9px;
    color: #eee;
}

.manjaro {
    width: 20px;
    height: 20px;
    flex: none;
    margin-right: 10px;
}

.pager {
    display: grid;
    grid-template-columns: 38px 38px;
    grid-template-rows: 21px 21px;
    gap: 1px;
    flex: none;
    margin-right: 14px;
}

.desk {
    background-color: #23282d;
    border: 1px solid #2c3237;
}

.desk.current {
    background-color: #9adbcc;
    border-color: #1abc9c;
}

.firefox {
    width: 32px;
    height: 36px;
    flex: none;
    margin-right: 8px;
}

.task {
    width: 247.500px;
    height: 44px;
    flex: none;
    margin-right: 2.500px;
    display: flex;
    align-items: center;
    padding-left: 7px;
    background-color: #4e5356;
    border: 1px solid #5c6266;
    border-radius: 3px;
    font-size: 15px;
    white-space: nowrap;
    overflow: hidden;
}

.task.current {
    background-color: #26685f;
    border-color: #1abc9c;
}

.task-ico {
    width: 30px;
    height: 30px;
    flex: none;
    margin-right: 9px;
}

.tray {
    display: flex;
    align-items: center;
    margin-left: 15px;
    gap: 8px;
    flex: none;
}

.tray svg {
    width: 20px;
    height: 20px;
    display: block;
}

.clock {
    font-size: 32px;
    font-weight: 300;
    color: #f5f5f5;
    white-space: nowrap;
    margin-left: 13px;
    flex: none;
}

.kde {
    width: 34px;
    height: 34px;
    flex: none;
    margin-left: 15px;
}

.sliders {
    width: 14px;
    height: 14px;
    flex: none;
    margin-left: 9px;
}
```
